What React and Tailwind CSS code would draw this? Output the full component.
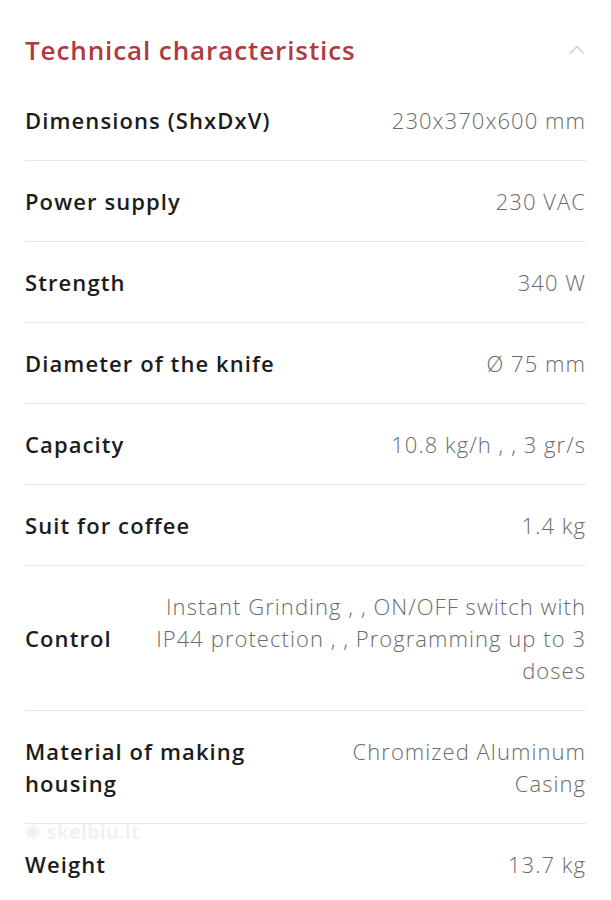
const specs = [
  { label: 'Dimensions (ShxDxV)', value: '230x370x600 mm' },
  { label: 'Power supply', value: '230 VAC' },
  { label: 'Strength', value: '340 W' },
  { label: 'Diameter of the knife', value: 'Ø 75 mm' },
  { label: 'Capacity', value: '10.8 kg/h , , 3 gr/s' },
  { label: 'Suit for coffee', value: '1.4 kg' },
  { label: 'Control', value: 'Instant Grinding , , ON/OFF switch with IP44 protection , , Programming up to 3 doses' },
  { label: 'Material of making housing', value: 'Chromized Aluminum Casing' },
  { label: 'Weight', value: '13.7 kg' },
];

export default function App() {
  return (
    <div className="min-h-[900px] bg-white px-[25px] pt-[30px] font-['Open_Sans',sans-serif]">
      <div className="flex items-center justify-between h-[40px] mb-[10px]">
        <h2 className="text-[26px] font-semibold text-[#b2393f] tracking-[0.9px]">Technical characteristics</h2>
        <svg width="16" height="10" viewBox="0 0 16 10" className="mr-[1px]">
          <path d="M1 8.5 L8 1.5 L15 8.5" fill="none" stroke="#cfcfcf" strokeWidth="1.4" />
        </svg>
      </div>
      <div>
        {specs.map((s, i) => (
          <div
            key={s.label}
            className={`relative flex items-center justify-between gap-9 py-[24px] text-[22px] leading-[32px] ${i < specs.length - 1 ? 'border-b border-[#e8e8e8]' : ''}`}
          >
            {i === specs.length - 1 && (
              <div className="absolute left-0 top-[-3px] text-[19px] leading-[22px] font-bold text-[#f1f1f1] tracking-[0.5px] pointer-events-none">
                ❋ skelbiu.lt
              </div>
            )}
            <div className="font-semibold text-[#1c1c1c] tracking-[1.1px]">{s.label}</div>
            <div className="text-right font-light text-[#6b6b6b] tracking-[1.05px]">{s.value}</div>
          </div>
        ))}
      </div>
    </div>
  );
}
